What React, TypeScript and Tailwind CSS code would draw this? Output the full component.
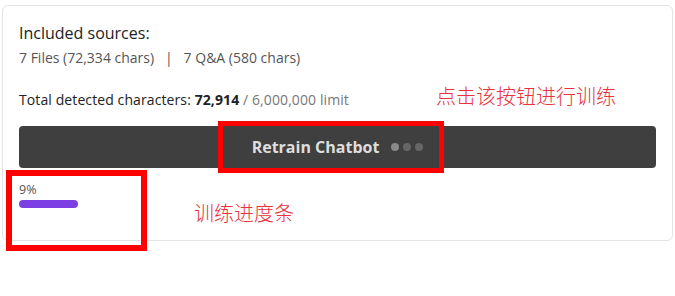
export default function App() {
  const font = { fontFamily: '"Open Sans", "Noto Sans", sans-serif' };
  const cjk = { fontFamily: '"Noto Sans CJK SC", sans-serif', fontWeight: 300 };
  return (
    <div className="relative h-[296px] w-[675px] bg-white pl-[2px] pt-[5px]" style={font}>
      <div className="h-[236px] w-[671px] rounded-md border border-[#e3e3e3] px-4 pt-[15px]">
        <div className="text-[16px] leading-6 text-[#222]">Included sources:</div>
        <div className="mt-[3px] text-[14px] leading-5 text-[#555]">
          7 Files (72,334 chars)&nbsp;&nbsp; |&nbsp;&nbsp; 7 Q&amp;A (580 chars)
        </div>
        <div className="mt-[22px] text-[14px] leading-5 tracking-[0.1px] text-[#222]">
          Total detected characters: <span className="font-bold">72,914</span>
          <span className="text-[#777]"> / 6,000,000 limit</span>
        </div>
        <button className="mt-4 flex h-[42px] w-full items-center justify-center gap-3 rounded-[4px] bg-[#3f3f3f] text-[16px] font-bold text-[#dedede]">
          Retrain Chatbot
          <span className="flex items-center gap-[4px]">
            <span className="h-2 w-2 rounded-full bg-[#8a8a8a]" />
            <span className="h-2 w-2 rounded-full bg-[#666]" />
            <span className="h-2 w-2 rounded-full bg-[#666]" />
          </span>
        </button>
        <div className="mt-[14px] text-[12.5px] leading-4 text-[#555]">9%</div>
        <div className="mt-[2px] h-2 w-[59px] rounded-full bg-[#7b3fe4]" />
      </div>

      {/* annotations drawn over the card */}
      <div className="absolute left-[218px] top-[121px] h-[52px] w-[226px] border-[5px] border-[#f00]" />
      <div className="absolute left-[6px] top-[170px] h-[81px] w-[141px] border-[6px] border-[#f00]" />
      <div className="absolute left-[436px] top-[84px] text-[20px] leading-6 text-[#e8323c]" style={cjk}>
        点击该按钮进行训练
      </div>
      <div className="absolute left-[194px] top-[201px] text-[20px] leading-6 text-[#e8323c]" style={cjk}>
        训练进度条
      </div>
    </div>
  );
}
